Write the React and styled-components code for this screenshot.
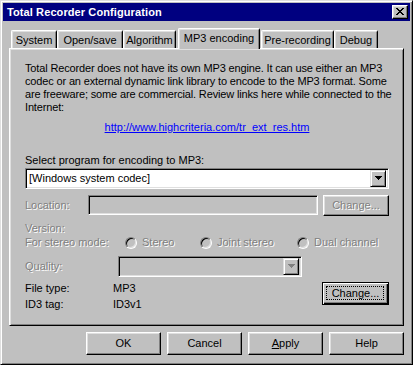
import React from 'react';
import styled, { createGlobalStyle } from 'styled-components';

const Global = createGlobalStyle`
  html, body { margin: 0; padding: 0; background: #c0c0c0; }
  body { font-family: "Liberation Sans", Arial, sans-serif; font-size: 11px; }
  * { box-sizing: border-box; }
`;

const Window = styled.div`
  width: 413px;
  height: 365px;
  background: #c0c0c0;
  border: 1px solid;
  border-color: #dfdfdf #000 #000 #dfdfdf;
  box-shadow: inset 1px 1px #fff, inset -1px -1px #808080;
  padding: 2px;
  display: flex;
  flex-direction: column;
  color: #000;
  font: 11px/13px "Liberation Sans", Arial, sans-serif;
`;

const TitleBar = styled.div`
  height: 18px;
  background: #000080;
  display: flex;
  align-items: center;
  justify-content: space-between;
  padding: 0 2px 0 4px;
`;

const Title = styled.span`
  color: #fff;
  font-weight: bold;
  font-size: 11px;
  letter-spacing: 0.1px;
`;

const CloseBtn = styled.div`
  width: 16px;
  height: 14px;
  background: #c0c0c0;
  border: 1px solid;
  border-color: #fff #000 #000 #fff;
  box-shadow: inset -1px -1px #808080, inset 1px 1px #dfdfdf;
  display: flex;
  align-items: center;
  justify-content: center;
  padding: 0 1px 1px 0;
`;

const Body = styled.div`
  flex: 1;
  display: flex;
  flex-direction: column;
  padding: 7px 6px 7px 6px;
`;

const TabRow = styled.div`
  height: 20px;
  display: flex;
  align-items: flex-end;
  padding-left: 2px;
`;

const Tab = styled.div`
  position: relative;
  z-index: ${p => (p.$active ? 1 : 0)};
  width: ${p => p.$w}px;
  height: ${p => (p.$active ? 21 : 18)}px;
  margin: 0 ${p => (p.$active ? 1 : 0)}px ${p => (p.$active ? -1 : 0)}px ${p => (p.$active ? 2 : 0)}px;
  background: #c0c0c0;
  border-top: 1px solid #fff;
  border-left: 1px solid #fff;
  border-right: 1px solid #000;
  border-radius: 2px 2px 0 0;
  box-shadow: inset 1px 1px #dfdfdf, inset -1px 0 #808080;
  text-align: center;
  padding-top: 3px;
  line-height: 13px;
  white-space: nowrap;
`;

const Panel = styled.div`
  height: 278px;
  background: #c0c0c0;
  border: 1px solid;
  border-color: #fff #000 #000 #fff;
  box-shadow: inset 1px 1px #dfdfdf, inset -1px -1px #808080;
  padding: 13px 14px 0 15px;
  display: flex;
  flex-direction: column;
`;

const Para = styled.p`
  margin: 0;
  line-height: 13px;
  white-space: nowrap;
  letter-spacing: -0.15px;
`;

const LinkLine = styled.div`
  margin-top: 7px;
  text-align: center;
  line-height: 13px;
`;

const Link = styled.a`
  color: #0000ff;
  text-decoration: underline;
`;

const Label = styled.div`
  margin-top: ${p => p.$mt || 0}px;
  line-height: 13px;
  white-space: nowrap;
  width: ${p => (p.$w ? `${p.$w}px` : 'auto')};
  flex-shrink: 0;
  color: ${p => (p.$disabled ? '#808080' : '#000')};
  text-shadow: ${p => (p.$disabled ? '1px 1px 0 #fff' : 'none')};
`;

const Combo = styled.div`
  margin-top: ${p => p.$mt || 0}px;
  width: ${p => (p.$w ? `${p.$w}px` : '100%')};
  height: 21px;
  background: ${p => (p.$disabled ? '#c0c0c0' : '#fff')};
  border: 1px solid;
  border-color: #808080 #fff #fff #808080;
  box-shadow: inset 1px 1px #000, inset -1px -1px #dfdfdf;
  padding: 2px 2px 2px 2px;
  display: flex;
  align-items: center;
  justify-content: space-between;
`;

const ComboText = styled.span`
  padding-left: 1px;
  line-height: 13px;
`;

const ArrowBtn = styled.div`
  width: 16px;
  height: 17px;
  background: #c0c0c0;
  border: 1px solid;
  border-color: #dfdfdf #000 #000 #dfdfdf;
  box-shadow: inset 1px 1px #fff, inset -1px -1px #808080;
  display: flex;
  align-items: center;
  justify-content: center;
  padding-bottom: 1px;
`;

const Row = styled.div`
  margin-top: ${p => p.$mt || 0}px;
  display: flex;
  align-items: ${p => p.$align || 'center'};
  height: ${p => (p.$h ? `${p.$h}px` : 'auto')};
`;

const Edit = styled.div`
  width: ${p => p.$w}px;
  height: 20px;
  align-self: flex-start;
  background: #c0c0c0;
  border: 1px solid;
  border-color: #808080 #fff #fff #808080;
  box-shadow: inset 1px 1px #000, inset -1px -1px #dfdfdf;
`;

const Button = styled.button`
  position: relative;
  width: ${p => p.$w}px;
  height: ${p => p.$h}px;
  margin-left: ${p => p.$ml || 0}px;
  flex-shrink: 0;
  background: #c0c0c0;
  font: 11px/13px "Liberation Sans", Arial, sans-serif;
  color: ${p => (p.$disabled ? '#808080' : '#000')};
  text-shadow: ${p => (p.$disabled ? '1px 1px 0 #fff' : 'none')};
  padding: 0;
  align-self: flex-start;
  border: 1px solid;
  border-color: ${p => (p.$default ? '#000' : '#fff #000 #000 #fff')};
  box-shadow: ${p =>
    p.$default
      ? 'inset 1px 1px #fff, inset -1px -1px #000, inset -2px -2px #808080'
      : 'inset -1px -1px #808080, inset 1px 1px #dfdfdf'};
  &::after {
    content: '';
    display: ${p => (p.$default ? 'block' : 'none')};
    position: absolute;
    inset: 3px 4px 4px 3px;
    border: 1px dotted #000;
  }
`;

const RadioOpt = styled.div`
  width: ${p => (p.$w ? `${p.$w}px` : 'auto')};
  display: flex;
  align-items: center;
  flex-shrink: 0;
`;

const RadioCircle = styled.span`
  width: 12px;
  height: 12px;
  border-radius: 50%;
  background: #c0c0c0;
  border: 1px solid;
  border-color: #808080 #fff #fff #808080;
  box-shadow: inset 1px 1px #000, inset -1px -1px #dfdfdf;
  margin-right: 5px;
  flex-shrink: 0;
`;

const InfoCol = styled.div`
  flex: 1;
  display: flex;
  flex-direction: column;
  gap: 3px;
`;

const InfoLine = styled.div`
  display: flex;
  line-height: 13px;
`;

const Underline = styled.span`
  text-decoration: underline;
`;

const ButtonRow = styled.div`
  margin-top: 6px;
  display: flex;
  justify-content: flex-end;
  gap: 6px;
`;

const DownArrow = ({ color = '#000' }) => (
  <svg width="7" height="4" viewBox="0 0 7 4" shapeRendering="crispEdges">
    <rect x="0" y="0" width="7" height="1" fill={color} />
    <rect x="1" y="1" width="5" height="1" fill={color} />
    <rect x="2" y="2" width="3" height="1" fill={color} />
    <rect x="3" y="3" width="1" height="1" fill={color} />
  </svg>
);

const CloseX = () => (
  <svg width="8" height="7" viewBox="0 0 8 7" shapeRendering="crispEdges">
    <g fill="#000">
      <rect x="0" y="0" width="2" height="1" />
      <rect x="6" y="0" width="2" height="1" />
      <rect x="1" y="1" width="2" height="1" />
      <rect x="5" y="1" width="2" height="1" />
      <rect x="2" y="2" width="4" height="1" />
      <rect x="3" y="3" width="2" height="1" />
      <rect x="2" y="4" width="4" height="1" />
      <rect x="1" y="5" width="2" height="1" />
      <rect x="5" y="5" width="2" height="1" />
      <rect x="0" y="6" width="2" height="1" />
      <rect x="6" y="6" width="2" height="1" />
    </g>
  </svg>
);

const tabs = [
  { label: 'System', w: 46 },
  { label: 'Open/save', w: 66 },
  { label: 'Algorithm', w: 53 },
  { label: 'MP3 encoding', w: 82, active: true },
  { label: 'Pre-recording', w: 73 },
  { label: 'Debug', w: 44 },
];

export default function App() {
  return (
    <>
      <Global />
      <Window>
        <TitleBar>
          <Title>Total Recorder Configuration</Title>
          <CloseBtn>
            <CloseX />
          </CloseBtn>
        </TitleBar>
        <Body>
          <TabRow>
            {tabs.map(t => (
              <Tab key={t.label} $w={t.w} $active={t.active}>
                {t.label}
              </Tab>
            ))}
          </TabRow>
          <Panel>
            <Para>
              Total Recorder does not have its own MP3 engine. It can use either an MP3
              <br />
              codec or an external dynamic link library to encode to the MP3 format. Some
              <br />
              are freeware; some are commercial. Review links here while connected to the
              <br />
              Internet:
            </Para>
            <LinkLine>
              <Link>http://www.highcriteria.com/tr_ext_res.htm</Link>
            </LinkLine>
            <Label $mt={20}>Select program for encoding to MP3:</Label>
            <Combo $mt={1}>
              <ComboText>[Windows system codec]</ComboText>
              <ArrowBtn>
                <DownArrow />
              </ArrowBtn>
            </Combo>
            <Row $mt={6} $h={21}>
              <Label $w={63} $disabled>Location:</Label>
              <Edit $w={230} />
              <Button $w={66} $h={21} $ml={5} $disabled>Change...</Button>
            </Row>
            <Label $mt={6} $disabled>Version:</Label>
            <Row $mt={1} $h={13}>
              <Label $w={100} $disabled>For stereo mode:</Label>
              <RadioOpt $w={75}>
                <RadioCircle />
                <Label $disabled>Stereo</Label>
              </RadioOpt>
              <RadioOpt $w={97}>
                <RadioCircle />
                <Label $disabled>Joint stereo</Label>
              </RadioOpt>
              <RadioOpt>
                <RadioCircle />
                <Label $disabled>Dual channel</Label>
              </RadioOpt>
            </Row>
            <Row $mt={7} $h={21}>
              <Label $w={93} $disabled>Quality:</Label>
              <Combo $w={184} $disabled>
                <ComboText />
                <ArrowBtn>
                  <DownArrow color="#808080" />
                </ArrowBtn>
              </Combo>
            </Row>
            <Row $mt={5} $align="flex-start">
              <InfoCol>
                <InfoLine>
                  <Label $w={88}>File type:</Label>
                  <span>MP3</span>
                </InfoLine>
                <InfoLine>
                  <Label $w={88}>ID3 tag:</Label>
                  <span>ID3v1</span>
                </InfoLine>
              </InfoCol>
              <Button $w={67} $h={23} $default>Change...</Button>
            </Row>
          </Panel>
          <ButtonRow>
            <Button $w={75} $h={23}>OK</Button>
            <Button $w={75} $h={23}>Cancel</Button>
            <Button $w={75} $h={23}><Underline>A</Underline>pply</Button>
            <Button $w={75} $h={23}>Help</Button>
          </ButtonRow>
        </Body>
      </Window>
    </>
  );
}
